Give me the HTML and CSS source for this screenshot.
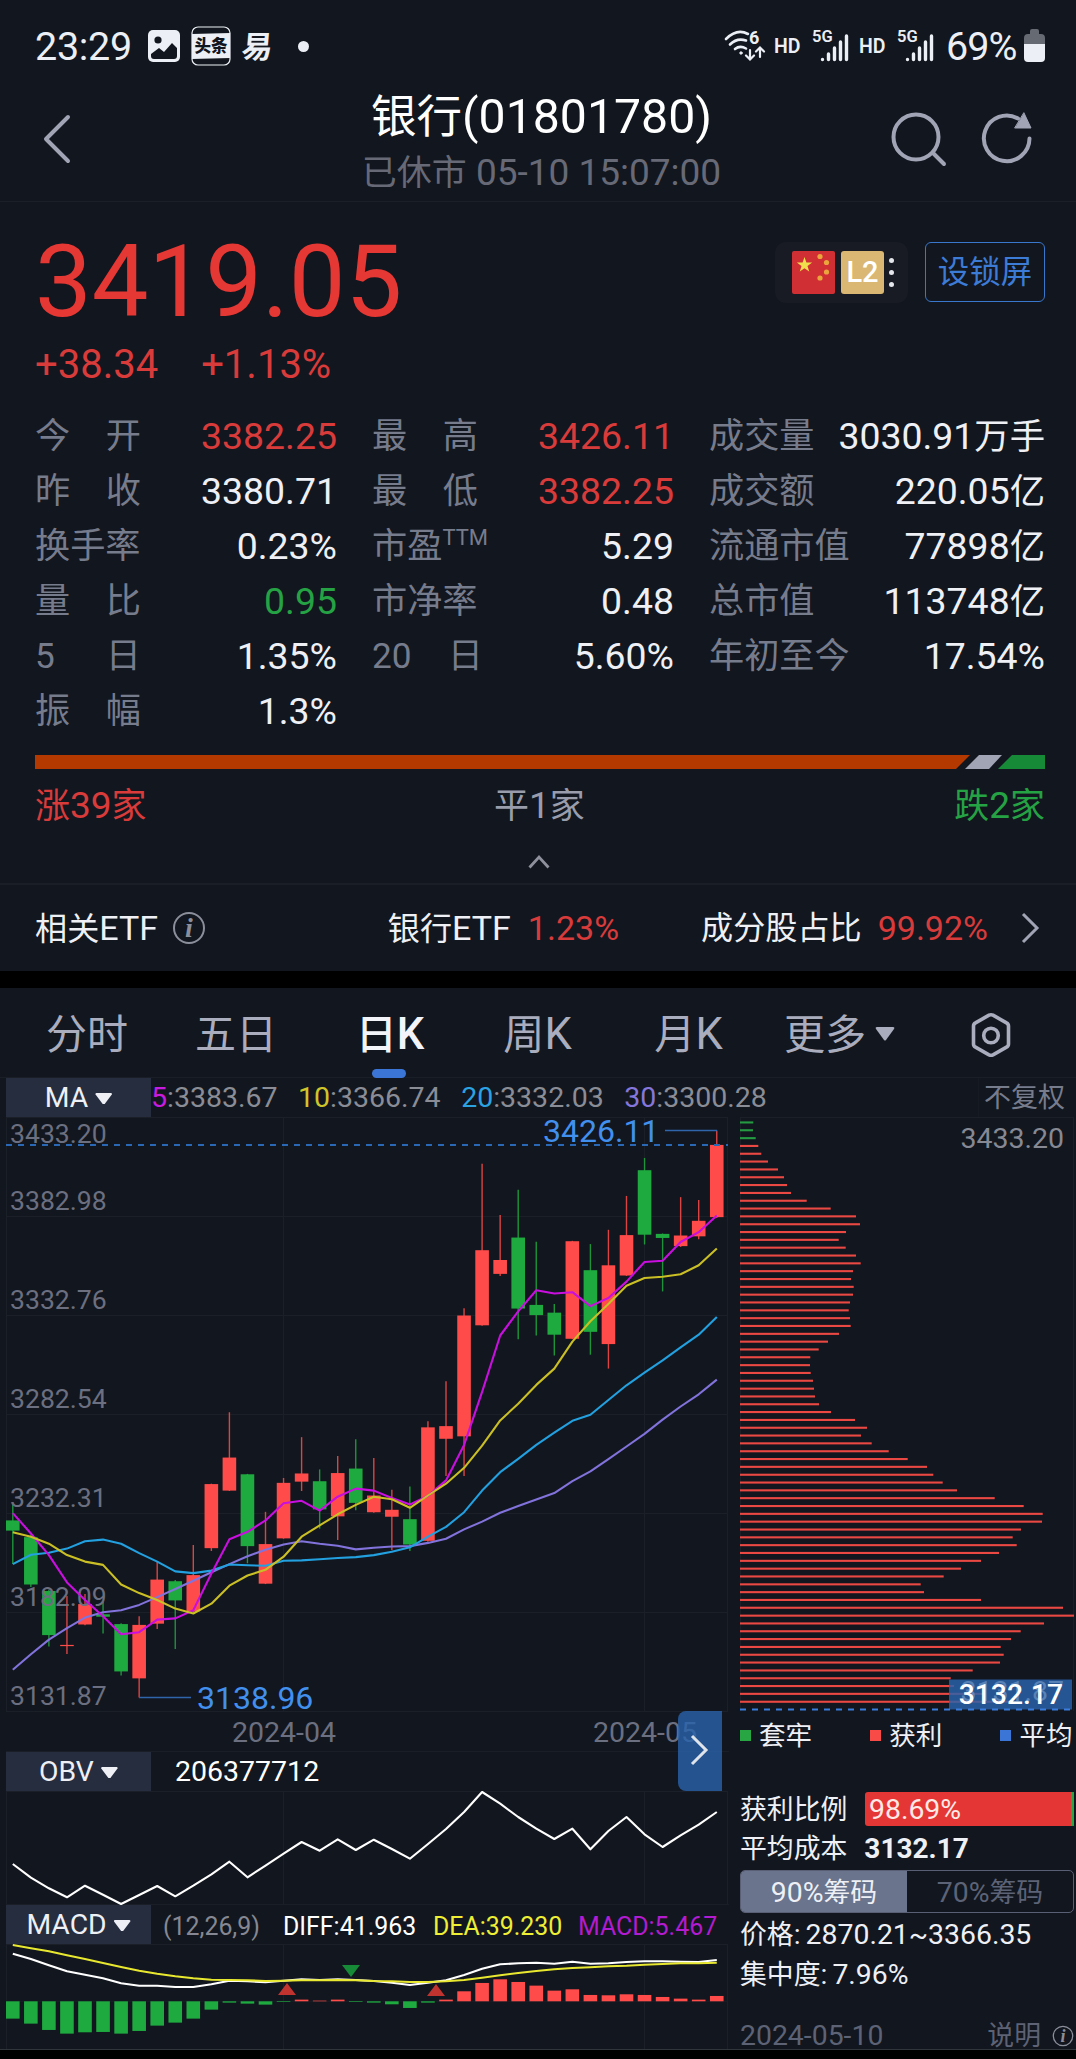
FILE: index.html
```html
<!DOCTYPE html>
<html lang="zh-CN">
<head>
    <meta charset="UTF-8">
    <meta name="viewport" content="width=device-width, initial-scale=1.0">
    <title>银行(01801780)</title>
    <link rel="stylesheet" href="styles.css">
</head>
<body>
    <div class="status-bar">
        <span class="clock">23:29</span>
        <svg class="icon-photo" width="32" height="32" viewBox="0 0 32 32">
            <rect width="32" height="32" rx="5" fill="#eceff5"/>
            <circle cx="10" cy="10" r="3.6" fill="#12161e"/>
            <path d="M3 24l8-6 5 4 8-9 5 5v8q0 3-3 3H6q-3 0-3-3z" fill="#12161e"/>
        </svg>
        <svg class="icon-news" width="40" height="40" viewBox="0 0 40 40">
            <rect x="1" y="1" width="38" height="38" rx="6" fill="none" stroke="#eceff5" stroke-width="1.2"/>
            <path d="M1 8l38-1v25l-38 1z" fill="#eceff5"/>
            <text x="20" y="26" class="news-text">头条</text>
        </svg>
        <span class="netease">易</span>
        <span class="dot"></span>
        <div class="status-right">
            <svg class="icon-wifi" width="42" height="32" viewBox="0 0 42 32" fill="none" stroke="#eceff5" stroke-width="2.6" stroke-linecap="round">
                <path d="M2 9Q13-2 24 4M6 14.500q7-7 16-4M11 19q5-4 11-.5"/>
                <circle cx="17" cy="23" r="1.200" fill="#eceff5" stroke-width="1"/>
                <path d="M26 20v9m-4-3.500l4 4 4-4M36 27v-9m-4 3.500l4-4 4 4" stroke-width="2.200"/>
                <text x="25" y="14" class="wifi-six">6</text>
            </svg>
            <span class="hd">HD</span>
            <svg class="icon-signal" width="37" height="32" viewBox="0 0 37 32">
                <text x="0" y="12" class="net">5G</text>
                <path d="M10.500 29.500v.1M16.500 24v5.500M22.500 18v11.500M28.500 12v17.500M34.500 6v23.500"/>
            </svg>
            <span class="hd hd-second">HD</span>
            <svg class="icon-signal" width="37" height="32" viewBox="0 0 37 32">
                <text x="0" y="12" class="net">5G</text>
                <path d="M10.500 29.500v.1M16.500 24v5.500M22.500 18v11.500M28.500 12v17.500M34.500 6v23.500"/>
            </svg>
            <span class="percent">69%</span>
            <svg class="icon-battery" width="21" height="34" viewBox="0 0 21 34">
                <path d="M6 2q0-2 2-2h5q2 0 2 2v3h2q4 0 4 4v7H0V9q0-4 4-4h2z" fill="#666a72"/>
                <path d="M0 15h21v14q0 4-4 4H4q-4 0-4-4z" fill="#eceff5"/>
            </svg>
        </div>
    </div>

    <div class="header">
        <svg class="back" width="28" height="48" viewBox="0 0 28 48"><path d="M25 2L3 24l22 22"/></svg>
        <div class="title-box">
            <div class="title"><span class="cn">银行</span>(01801780)</div>
            <div class="subtitle"><span class="cn">已休市</span> 05-10 15:07:00</div>
        </div>
        <div class="header-icons">
            <svg width="56" height="56" viewBox="0 0 56 56"><circle cx="24" cy="25" r="22.500"/><path d="M41 41l11 11"/></svg>
            <svg width="52" height="54" viewBox="0 0 52 54"><path d="M48.500 26.500A22.800 22.800 0 1 1 37 6.500"/><path class="solid" d="M43 1l7 15H34z"/></svg>
        </div>
    </div>

    <div class="quote">
        <div class="price-row">
            <div class="price">3419.05</div>
            <div class="badges">
                <div class="badge-group">
                    <svg width="43" height="43" viewBox="0 0 43 43">
                        <rect width="43" height="43" rx="2" fill="#d03034"/>
                        <path fill="#f0df4c" d="M12.500 6l1.900 5.500h5.700l-4.600 3.500 1.700 5.600-4.700-3.400-4.700 3.400 1.700-5.600L4.900 11.500h5.700z"/>
                        <g fill="#eaa63c"><circle cx="28" cy="5.500" r="2.600"/><circle cx="34.500" cy="11.500" r="2.600"/><circle cx="34.500" cy="21" r="2.600"/><circle cx="28" cy="27" r="2.600"/></g>
                    </svg>
                    <span class="level">L2</span>
                    <span class="more"><i></i><i></i><i></i></span>
                </div>
                <div class="lock-button">设锁屏</div>
            </div>
        </div>
        <div class="change"><span>+38.34</span><span>+1.13%</span></div>

        <div class="stats">
            <div class="stat"><label><i>今</i><i>开</i></label><b class="up">3382.25</b></div>
            <div class="stat"><label><i>最</i><i>高</i></label><b class="up">3426.11</b></div>
            <div class="stat"><label>成交量</label><b>3030.91<span class="cn">万手</span></b></div>
            <div class="stat"><label><i>昨</i><i>收</i></label><b>3380.71</b></div>
            <div class="stat"><label><i>最</i><i>低</i></label><b class="up">3382.25</b></div>
            <div class="stat"><label>成交额</label><b>220.05<span class="cn">亿</span></b></div>
            <div class="stat"><label>换手率</label><b>0.23%</b></div>
            <div class="stat"><label>市盈<sup>TTM</sup></label><b>5.29</b></div>
            <div class="stat"><label>流通市值</label><b>77898<span class="cn">亿</span></b></div>
            <div class="stat"><label><i>量</i><i>比</i></label><b class="down">0.95</b></div>
            <div class="stat"><label>市净率</label><b>0.48</b></div>
            <div class="stat"><label>总市值</label><b>113748<span class="cn">亿</span></b></div>
            <div class="stat"><label><i>5</i><i>日</i></label><b>1.35%</b></div>
            <div class="stat"><label class="wide"><i>20</i><i>日</i></label><b>5.60%</b></div>
            <div class="stat"><label>年初至今</label><b>17.54%</b></div>
            <div class="stat"><label><i>振</i><i>幅</i></label><b>1.3%</b></div>
        </div>

        <svg class="breadth" width="1010" height="14" viewBox="0 0 1010 14">
            <path d="M0 0h935l-14 14H0z" fill="#b33900"/>
            <path d="M944 0h23l-13 14h-24z" fill="#a0a4b5"/>
            <path d="M977 0h33v14h-47z" fill="#178a38"/>
        </svg>
        <div class="breadth-labels">
            <span class="up"><span class="cn">涨</span>39<span class="cn">家</span></span>
            <span class="flat"><span class="cn">平</span>1<span class="cn">家</span></span>
            <span class="down"><span class="cn">跌</span>2<span class="cn">家</span></span>
        </div>
        <svg class="collapse" width="22" height="14" viewBox="0 0 22 14"><path d="M1.500 12.500L11 2l9.500 10.500"/></svg>
    </div>

    <div class="etf">
        <span><span class="cn">相关</span>ETF</span>
        <svg class="info" width="34" height="34" viewBox="0 0 34 34"><circle cx="17" cy="17" r="15"/><text x="17" y="26">i</text></svg>
        <span class="etf-name"><span class="cn">银行</span>ETF</span>
        <span class="up etf-change">1.23%</span>
        <span class="cn etf-share">成分股占比</span>
        <span class="up etf-ratio">99.92%</span>
        <svg class="go" width="18" height="32" viewBox="0 0 18 32"><path d="M2 2l14 14L2 30"/></svg>
    </div>

    <div class="tabs">
        <span class="cn">分时</span>
        <span class="cn">五日</span>
        <span class="active"><span class="cn">日</span>K</span>
        <span><span class="cn">周</span>K</span>
        <span><span class="cn">月</span>K</span>
        <span class="tab-more"><span class="cn">更多</span><svg width="20" height="14" viewBox="0 0 20 14"><path d="M2 0h16q2 0 1 2l-8 11q-1 1-2 0L1 2q-1-2 1-2z" fill="#a9adbd"/></svg></span>
        <svg class="settings" width="42" height="46" viewBox="0 0 42 46"><path d="M19 3.200q2-1 4 0l13.500 7.600q2 1 2 3.200v18q0 2.200-2 3.200L23 42.800q-2 1-4 0L5.500 35.200q-2-1-2-3.200V14q0-2.200 2-3.200z"/><circle cx="21" cy="23.500" r="7.300"/></svg>
    </div>

    <div class="ma-row">
        <div class="picker">MA<i class="caret"></i></div>
        <div class="ma-values">
            <span><em class="c5">5</em>:3383.67</span>
            <span><em class="c10">10</em>:3366.74</span>
            <span><em class="c20">20</em>:3332.03</span>
            <span><em class="c30">30</em>:3300.28</span>
        </div>
        <div class="adjust">不复权</div>
    </div>

    <div class="charts">
        <div class="left">
            <svg id="kline" width="728" height="594" viewBox="0 0 728 594"></svg>
            <div class="dates">
                <span class="date-april">2024-04</span>
                <span class="date-may">2024-05</span>
                <div class="expand"><svg width="18" height="32" viewBox="0 0 18 32"><path d="M2 2l14 14L2 30"/></svg></div>
            </div>
            <div class="indicator">
                <div class="picker">OBV<i class="caret"></i></div>
                <span class="obv-value">206377712</span>
            </div>
            <svg id="obv" width="728" height="113" viewBox="0 0 728 113"></svg>
            <div class="indicator macd-head">
                <div class="picker">MACD<i class="caret"></i></div>
                <span class="params">(12,26,9)</span>
                <span class="diff">DIFF:41.963</span>
                <span class="dea">DEA:39.230</span>
                <span class="macd">MACD:5.467</span>
            </div>
            <svg id="macd" width="728" height="105" viewBox="0 0 728 105"></svg>
        </div>

        <div class="right">
            <svg id="chips" width="336" height="594" viewBox="0 0 336 594"></svg>
            <div class="legend">
                <span><i class="sq green"></i>套牢</span>
                <span><i class="sq red"></i>获利</span>
                <span><i class="sq blue"></i>平均</span>
            </div>
            <div class="profit"><span class="cn">获利比例</span><div class="profit-bar">98.69%</div></div>
            <div class="cost"><span class="cn">平均成本</span><strong>3132.17</strong></div>
            <div class="toggle">
                <div class="on">90%<span class="cn">筹码</span></div>
                <div>70%<span class="cn">筹码</span></div>
            </div>
            <div class="line"><span class="cn">价格</span>: 2870.21~3366.35</div>
            <div class="line"><span class="cn">集中度</span>: 7.96%</div>
            <div class="foot">
                <span>2024-05-10</span>
                <span class="explain"><span class="cn">说明</span><svg class="info" width="22" height="22" viewBox="0 0 34 34"><circle cx="17" cy="17" r="15"/><text x="17" y="26">i</text></svg></span>
            </div>
        </div>
    </div>

    <script src="chart.js"></script>
</body>
</html>
```
FILE: styles.css
```css
* {
    margin: 0;
    padding: 0;
    box-sizing: border-box;
}

body {
    width: 1076px;
    height: 2059px;
    overflow: hidden;
    background: #000000;
    color: #eef0f6;
    font-family: Roboto, 'Noto Sans CJK SC', sans-serif;
}

svg {
    display: block;
    flex: none;
    overflow: visible;
}

i, em {
    font-style: normal;
}

.cn {
    font-size: 0.945em;
}

.up {
    color: #d93b3b;
}

.down {
    color: #25a244;
}

/* status bar */
.status-bar {
    display: flex;
    align-items: center;
    height: 92px;
    padding: 0 31px 0 35px;
    background: #12161e;
    color: #eceff5;
    font-size: 39.5px;
}

.clock {
    width: 113px;
    letter-spacing: -0.3px;
}

.icon-news {
    margin-left: 11px;
}

.news-text {
    font-size: 16.5px;
    font-weight: 900;
    text-anchor: middle;
    fill: #12161e;
}

.netease {
    margin: -4px 0 0 11px;
    font-size: 31px;
    font-weight: 700;
    transform: skewX(-5deg);
}

.dot {
    width: 11px;
    height: 11px;
    margin-left: 25px;
    border-radius: 50%;
    background: #eceff5;
}

.status-right {
    display: flex;
    align-items: center;
    margin-left: auto;
}

.wifi-six {
    font-size: 18px;
    font-weight: 700;
    fill: #eceff5;
    stroke: none;
}

.hd {
    width: 38px;
    margin-left: 8px;
    font-size: 19.5px;
    font-weight: 600;
}

.hd-second {
    margin-left: 10px;
}

.icon-signal path {
    fill: none;
    stroke: #eceff5;
    stroke-width: 3.4;
    stroke-linecap: round;
}

.net {
    font-size: 16.5px;
    font-weight: 600;
    fill: #eceff5;
}

.percent {
    width: 78px;
    margin-left: 12px;
    letter-spacing: -1px;
}

/* header */
.header {
    display: flex;
    justify-content: space-between;
    height: 110px;
    padding: 0 43px;
    background: #12161e;
    border-bottom: 1px solid #1b1f27;
}

.back {
    margin-top: 23px;
}

.back path {
    fill: none;
    stroke: #a0a4b5;
    stroke-width: 4;
    stroke-linecap: round;
    stroke-linejoin: round;
}

.title-box {
    margin-left: 120px;
    text-align: center;
    white-space: nowrap;
}

.title {
    height: 50px;
    font-size: 48.2px;
    line-height: 50px;
    color: #ffffff;
}

.subtitle {
    margin-top: 8px;
    font-size: 37px;
    line-height: 46px;
    color: #676a76;
}

.header-icons {
    display: flex;
    gap: 33px;
    margin-top: 20px;
}

.header-icons svg {
    fill: none;
    stroke: #a0a4b5;
    stroke-width: 4;
    stroke-linecap: round;
}

.header-icons .solid {
    fill: #a0a4b5;
    stroke-width: 1;
}

/* quote */
.quote {
    height: 683px;
    padding: 0 31px 0 35px;
    background: #12161e;
    border-bottom: 2px solid #1a1e26;
}

.price-row {
    display: flex;
    justify-content: space-between;
    height: 140px;
}

.price {
    padding-top: 30px;
    font-size: 101px;
    line-height: 100px;
    color: #e53733;
}

.badges {
    display: flex;
    gap: 17px;
    padding-top: 40px;
}

.badge-group {
    display: flex;
    align-items: center;
    width: 133px;
    height: 61px;
    padding-left: 17px;
    border-radius: 11px;
    background: #181b23;
}

.level {
    width: 43px;
    height: 43px;
    margin-left: 6px;
    border-radius: 3px;
    background: #dab772;
    color: #ffffff;
    font-size: 29px;
    font-weight: 500;
    line-height: 43px;
    text-align: center;
}

.more {
    display: grid;
    gap: 7px;
    margin-left: 5px;
}

.more i {
    width: 5px;
    height: 5px;
    border-radius: 50%;
    background: #e4e6ec;
}

.lock-button {
    width: 120px;
    height: 60px;
    border: 1.5px solid #3977cc;
    border-radius: 6px;
    color: #3c7bd6;
    font-size: 31.5px;
    line-height: 59px;
    text-align: center;
}

.change {
    display: flex;
    gap: 43px;
    height: 67px;
    color: #d93b3b;
    font-size: 40px;
    line-height: 46px;
}

.stats {
    display: grid;
    grid-template-columns: 302px 302px 336px;
    column-gap: 35px;
}

.stat {
    display: flex;
    justify-content: space-between;
    height: 55px;
    font-size: 37.4px;
    line-height: 54px;
    white-space: nowrap;
}

.stat label {
    display: flex;
    justify-content: space-between;
    min-width: 106px;
    color: #777c8d;
    font-size: 35.2px;
}

.stat .wide {
    min-width: 111px;
}

.stat sup {
    margin-right: auto;
    font-size: 22px;
    line-height: 37px;
}

.stat b {
    font-weight: 400;
}

.breadth {
    margin-top: 16px;
}

.breadth-labels {
    display: flex;
    justify-content: space-between;
    margin-top: 12px;
    font-size: 37px;
    line-height: 50px;
}

.flat {
    margin-left: -22px;
    color: #999dab;
}

.collapse {
    margin: 23px auto 0 493px;
}

.collapse path {
    fill: none;
    stroke: #8e919c;
    stroke-width: 2.8;
}

/* related etf */
.etf {
    display: flex;
    align-items: center;
    height: 86px;
    padding: 0 37px 0 35px;
    background: #12161e;
    font-size: 34px;
    line-height: 86px;
    white-space: nowrap;
}

.info {
    margin-left: 14px;
    fill: none;
    stroke: #8b8f9b;
    stroke-width: 2;
}

.info text {
    font: italic 700 28px 'Liberation Serif', serif;
    text-anchor: middle;
    fill: #8b8f9b;
    stroke: none;
}

.etf-name {
    margin-left: auto;
}

.etf-change {
    margin-left: 17px;
}

.etf-share {
    margin-left: 82px;
}

.etf-ratio {
    margin-left: 16px;
}

.go {
    margin-left: 33px;
}

.go path,
.expand path {
    fill: none;
    stroke: #a0a4b5;
    stroke-width: 3;
}

/* tabs */
.tabs {
    display: grid;
    grid-template-columns: 174px 124px 184px 111px 191px 162px 130px;
    height: 89px;
    margin-top: 17px;
    padding-top: 3px;
    background: #12161e;
    color: #a9adbd;
    font-size: 43.5px;
    line-height: 88px;
    text-align: center;
}

.tabs > .cn {
    font-size: 41px;
}

.tabs .active {
    position: relative;
    color: #f2f4fa;
    font-weight: 500;
}

.active::after {
    content: '';
    position: absolute;
    left: 74px;
    top: 78px;
    width: 34px;
    height: 9px;
    border-radius: 5px;
    background: #3b76d6;
}

.tab-more {
    display: flex;
    align-items: center;
}

.tab-more svg {
    margin: 0 0 3px 9px;
}

.settings {
    margin: 21px 0 0 24px;
    fill: none;
    stroke: #a9adbd;
    stroke-width: 3.6;
}

/* ma row */
.ma-row {
    display: flex;
    height: 40px;
    padding-left: 6px;
    background: #12161e;
    border-top: 1px solid #1a1e26;
    font-size: 28.5px;
    line-height: 40px;
}

.picker {
    display: flex;
    align-items: center;
    justify-content: center;
    width: 145px;
    height: 40px;
    background: #252d3f;
    color: #eef0f6;
    font-size: 28.3px;
    line-height: 40px;
}

.caret {
    width: 17px;
    height: 11px;
    margin: 1px 0 0 7px;
    background: #eef0f6;
    clip-path: polygon(0 8%, 6% 0, 94% 0, 100% 8%, 56% 100%, 44% 100%);
}

.ma-values {
    display: flex;
    gap: 20.500px;
    color: #8a8d96;
}

.c5 { color: #c81be0; }
.c10 { color: #cfc52a; }
.c20 { color: #2ba2e2; }
.c30 { color: #8576dc; }

.adjust {
    margin-left: auto;
    width: 98px;
    padding-left: 5px;
    border-left: 1px solid #161a22;
    color: #777c8d;
    font-size: 27px;
    white-space: nowrap;
}

/* charts */
.charts {
    display: flex;
    justify-content: space-between;
    height: 933px;
    background: #12161e;
    border-bottom: 1px solid #30343b;
}

.left {
    width: 729px;
}

.right {
    width: 336px;
    font-size: 28.4px;
    white-space: nowrap;
}

.axis {
    font-size: 26.6px;
    fill: #6b6f80;
}

.mark {
    font-size: 32px;
    fill: #4290ee;
}

.dates {
    position: relative;
    display: flex;
    gap: 257px;
    height: 40px;
    padding-left: 232px;
    color: #6b6f80;
    font-size: 28.5px;
    line-height: 43px;
}

/* drawer handle lies over the date axis and the indicator row */
.expand {
    position: absolute;
    left: 678px;
    top: 0;
    width: 44px;
    height: 80px;
    padding: 23px 0 0 12px;
    border-radius: 8px 0 0 8px;
    background: rgba(41, 99, 172, 0.8);
}

.expand path {
    stroke: #dfe3ea;
}

.indicator {
    display: flex;
    height: 40px;
    margin-left: 6px;
    border-top: 1px solid #1a1e26;
    line-height: 40px;
    white-space: nowrap;
}

.obv-value {
    margin-left: 24px;
    color: #ffffff;
    font-size: 28.5px;
}

.macd-head {
    font-size: 24.9px;
}

.macd-head > span {
    padding-top: 2px;
}

.params {
    width: 120px;
    margin-left: 12px;
    color: #858892;
}

.diff {
    width: 150px;
    color: #ffffff;
}

.dea {
    width: 145px;
    color: #eeee35;
}

.macd {
    color: #b31bd0;
}

.legend {
    display: flex;
    gap: 58px;
    height: 50px;
    font-size: 26.6px;
    line-height: 49px;
}

.sq {
    display: inline-block;
    width: 11px;
    height: 11px;
    margin-right: 8px;
    vertical-align: 4px;
}

.green { background: #27a643; }
.red { background: #f84b47; }
.blue { background: #3b76d6; }

.profit {
    display: flex;
    justify-content: space-between;
    height: 34px;
    margin-top: 31px;
    padding-right: 2px;
    line-height: 36px;
}

.profit-bar {
    width: 209px;
    padding-left: 4px;
    border-right: 3px solid #27a643;
    border-radius: 3px 0 0 3px;
    background: #e43735;
    color: #ffe9e6;
}

.cost {
    height: 44px;
    line-height: 46px;
}

.cost strong {
    margin-left: 17px;
    font-size: 28px;
    font-weight: 700;
}

.toggle {
    display: flex;
    width: 334px;
    height: 43px;
    border: 1px solid #596076;
    border-radius: 5px;
    overflow: hidden;
    color: #5d6377;
    line-height: 44px;
    text-align: center;
}

.toggle div {
    flex: 1;
}

.toggle .on {
    background: #6a748c;
    color: #eef0f6;
}

.line {
    height: 39.5px;
    line-height: 44px;
    word-spacing: -2px;
}

.foot {
    display: flex;
    justify-content: space-between;
    margin-top: 30px;
    padding-right: 2px;
    color: #5d6275;
    line-height: 28px;
}

.explain {
    display: flex;
}

.explain .info {
    margin: 3px 0 0 11px;
}
```
FILE: chart.js
```javascript
const RED = '#ff4c4a';
const GREEN = '#1faa3f';
const GRID = '#1b1f27';
const BAR = 13.6;

// [up, high, top, bottom, low]
const candles = [
    [0, 988, 1030, 1055, 1137], [0, 1066, 1071, 1187, 1193], [0, 1200, 1203, 1311, 1339], [1, 1215, 1335, 1338, 1357],
    [1, 1210, 1235, 1285, 1287], [0, 1230, 1260, 1266, 1307], [0, 1282, 1284, 1400, 1410], [1, 1265, 1286, 1417, 1464],
    [1, 1130, 1175, 1283, 1296], [0, 1176, 1179, 1226, 1345], [1, 1090, 1164, 1253, 1255], [1, 940, 941, 1098, 1105],
    [1, 765, 876, 957, 958], [0, 916, 917, 1093, 1135], [1, 1009, 1088, 1185, 1186], [1, 926, 938, 1074, 1075],
    [1, 826, 915, 935, 958], [0, 905, 934, 1003, 1050], [1, 872, 914, 1020, 1078], [0, 831, 903, 987, 1005],
    [1, 877, 969, 1010, 1011], [1, 955, 1004, 1021, 1103], [0, 947, 1027, 1089, 1105], [1, 787, 802, 1080, 1082],
    [1, 689, 799, 830, 921], [1, 510, 528, 824, 921], [1, 156, 368, 552, 553], [1, 282, 392, 426, 431],
    [0, 220, 337, 511, 586], [0, 347, 502, 527, 577], [0, 500, 521, 575, 626], [1, 345, 346, 585, 586],
    [0, 353, 417, 568, 624], [1, 318, 405, 598, 658], [1, 235, 331, 430, 431], [0, 142, 172, 330, 354],
    [0, 327, 328, 338, 469], [1, 238, 332, 358, 360], [1, 245, 296, 334, 341], [1, 75, 110, 287, 289]
];

const averages = {
    '#8172dc': [1396, 1358, 1322, 1294, 1268, 1255, 1250, 1237, 1218, 1198, 1178, 1157, 1137, 1118, 1102, 1089, 1081, 1087, 1092, 1101, 1097, 1094, 1093, 1085, 1075, 1052, 1033, 1011, 995, 979, 963, 934, 910, 880, 849, 818, 783, 751, 721, 685],
    '#22a0e0': [1137, 1114, 1109, 1099, 1081, 1077, 1087, 1110, 1131, 1155, 1159, 1153, 1138, 1140, 1141, 1129, 1128, 1125, 1122, 1120, 1115, 1107, 1096, 1070, 1046, 1010, 957, 912, 879, 845, 815, 786, 771, 735, 699, 668, 638, 606, 575, 532],
    '#c90fdf': [1012, 1062, 1115, 1182, 1225, 1265, 1309, 1304, 1273, 1270, 1250, 1160, 1076, 1058, 1030, 988, 982, 1006, 972, 952, 957, 975, 991, 970, 932, 845, 715, 577, 518, 466, 474, 471, 505, 485, 445, 397, 394, 348, 324, 283],
    '#cabf25': [1059, 1070, 1087, 1115, 1131, 1139, 1187, 1208, 1225, 1246, 1258, 1234, 1190, 1165, 1151, 1119, 1070, 1042, 1015, 992, 972, 978, 999, 969, 940, 901, 847, 785, 744, 698, 658, 592, 542, 500, 455, 436, 433, 427, 405, 364]
};

const obv = [432, 473, 505, 532, 497, 524, 552, 525, 498, 529, 497, 463, 425, 472, 437, 401, 366, 392, 358, 390, 359, 387, 416, 372, 327, 276, 216, 251, 291, 326, 357, 326, 388, 333, 291, 343, 381, 346, 314, 276];
const diff = [701, 717, 736, 754, 764, 775, 790, 797, 797, 801, 801, 793, 782, 784, 787, 782, 778, 780, 778, 780, 783, 788, 795, 788, 781, 765, 746, 733, 730, 728, 731, 725, 731, 730, 726, 724, 724, 725, 726, 720];
const dea = [675, 685, 694, 706, 717, 729, 741, 752, 761, 769, 775, 779, 780, 781, 783, 782, 781, 781, 780, 781, 783, 784, 786, 786, 784, 780, 773, 766, 759, 753, 748, 744, 742, 739, 737, 734, 732, 730, 730, 728];
const hist = [-52, -67, -86, -97, -93, -92, -97, -89, -73, -64, -52, -25, -4, -7, -10, -2, 5, 2, 5, -2, -4, -9, -20, -4, 5, 30, 55, 66, 58, 47, 32, 36, 19, 18, 21, 19, 13, 8, 5, 16];

const chips = [112, 111, 119, 127, 136, 156, 186, 204, 213, 225, 272, 344, 420, 432, 390, 368, 389, 420, 434, 411, 405, 413, 411, 402, 398, 402, 404, 369, 336, 308, 283, 282, 284, 291, 294, 297, 309, 345, 417, 453, 435, 467, 518, 575, 633, 652, 680, 723, 836, 923, 980, 978, 915, 890, 902, 849, 795, 735, 683, 614, 624, 795, 1041, 1074, 984, 914, 885, 854, 863, 852, 770, 704, 714, 800, 890];

const x = i => 12.8 + i * 18.05;
const priceY = v => v / 2.45 - 17;

function line(x1, y1, x2, y2, color, width = 1, extra = '') {
    return `<path d="M${x1} ${y1}L${x2} ${y2}" stroke="${color}" stroke-width="${width}" fill="none" ${extra}/>`;
}

function rect(left, top, width, height, color) {
    return `<rect x="${left}" y="${top}" width="${width}" height="${height}" fill="${color}"/>`;
}

function curve(values, y, color) {
    const points = values.map((v, i) => `${x(i).toFixed(1)},${y(v).toFixed(1)}`).join(' ');
    return `<polyline points="${points}" fill="none" stroke="${color}" stroke-width="2.1" stroke-linejoin="round"/>`;
}

function frame(height) {
    return [6.5, 283.5, 644.5, 727.5].map(v => line(v, 0, v, height, GRID)).join('') + line(6, 0.5, 728, 0.5, GRID);
}

function drawKline() {
    let out = frame(594);
    for (let i = 1; i <= 6; i++) {
        out += line(6, Math.round(i * 99) + 0.5, 728, Math.round(i * 99) + 0.5, GRID);
    }
    candles.forEach(([up, high, top, bottom, low], i) => {
        const color = up ? RED : GREEN;
        out += line(x(i), priceY(high), x(i), priceY(low), color, 1.4, 'opacity="0.85"');
        out += rect(x(i) - BAR / 2, priceY(top), BAR, priceY(bottom) - priceY(top), color);
    });
    const labels = ['3433.20', '3382.98', '3332.76', '3282.54', '3232.31', '3182.09', '3131.87'];
    const baselines = [25.5, 92.5, 191.5, 290.5, 389.5, 488.5, 588];
    labels.forEach((text, i) => {
        out += `<text class="axis" x="10" y="${baselines[i]}">${text}</text>`;
    });
    out += line(6, 28, 728, 28, '#2a68b6', 2.2, 'stroke-dasharray="6 6"');
    for (const color in averages) {
        out += curve(averages[color], priceY, color);
    }
    out += line(139, 580.5, 191, 580.5, '#2f66ab', 1.5);
    out += '<text class="mark" x="197" y="592">3138.96</text>';
    out += line(665, 13.5, 717, 13.5, '#2f66ab', 1.5);
    out += '<text class="mark" x="543" y="25">3426.11</text>';
    document.getElementById('kline').innerHTML = out;
}

function drawObv() {
    document.getElementById('obv').innerHTML = frame(113) + curve(obv, v => v / 3 - 71, '#ffffff');
}

function drawMacd() {
    const y = v => v / 3 - 224;
    const zero = 57.3;
    let out = frame(105);
    out += line(6, zero, 728, zero, GRID);
    hist.forEach((v, i) => {
        const h = Math.abs(v) / 3;
        out += rect(x(i) - BAR / 2, v > 0 ? zero - h : zero, BAR, h, v > 0 ? RED : GREEN);
    });
    out += curve(diff, y, '#ffffff') + curve(dea, y, '#e8e830');
    out += '<path d="M342 21h18l-9 12z" fill="#178a38"/>';
    out += '<path d="M278 51h18l-9-12zM427 52h18l-9-12z" fill="#c0332f"/>';
    document.getElementById('macd').innerHTML = out;
}

function drawChips() {
    let out = line(0, 0.5, 334, 0.5, GRID) + line(333.5, 0, 333.5, 594, GRID) + line(0.5, 0, 0.5, 594, GRID);
    chips.forEach((v, i) => {
        out += rect(0, (4.4 + i * 7.828).toFixed(1), (v / 3 - 24).toFixed(1), 2.1, i < 3 ? '#259a42' : '#ea4843');
    });
    out += '<text x="324" y="31" text-anchor="end" font-size="28.5" fill="#868993">3433.20</text>';
    out += '<rect x="209" y="562.5" width="123" height="30" fill="#2963ac" opacity="0.82"/>';
    out += '<text x="324" y="583.5" text-anchor="end" font-size="28.5" fill="#6f97c8" opacity="0.7">3131.87</text>';
    out += line(0, 592.5, 332, 592.5, '#3a7ddc', 2, 'stroke-dasharray="6 6"');
    out += '<text x="323" y="587" text-anchor="end" font-size="28.3" font-weight="500" fill="#ffffff">3132.17</text>';
    document.getElementById('chips').innerHTML = out;
}

drawKline();
drawObv();
drawMacd();
drawChips();
```
